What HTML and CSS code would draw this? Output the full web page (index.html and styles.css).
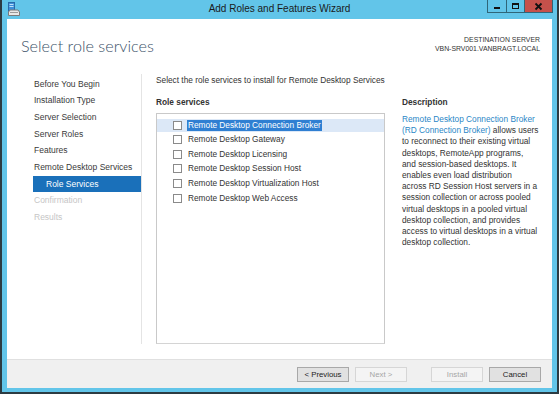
FILE: index.html
```html
<!DOCTYPE html>
<html lang="en">
<head>
    <meta charset="UTF-8">
    <title>Add Roles and Features Wizard</title>
    <link rel="stylesheet" href="styles.css">
</head>
<body>
    <div class="window">
        <div class="titlebar">
            <div class="title-left">
                <svg class="app-icon" width="12" height="14" viewBox="0 0 12 14">
                    <rect x="0.5" y="0.5" width="6" height="9" fill="#3d8fd8" stroke="#2a6aa8"/>
                    <rect x="1.5" y="2" width="4" height="1" fill="#bfe0f8"/>
                    <rect x="1.5" y="4" width="4" height="1" fill="#bfe0f8"/>
                    <path d="M2 8 L10 8 L11.5 10 L11.5 13.5 L0.5 13.5 L0.5 10 Z" fill="#e8e8e8" stroke="#7a7a7a"/>
                    <rect x="2" y="10" width="8" height="1" fill="#9a9a9a"/>
                </svg>
            </div>
            <div class="title-text">Add Roles and Features Wizard</div>
            <div class="title-right">
                <svg class="controls" width="66" height="13" viewBox="0 0 66 13">
                    <rect x="0.5" y="-1" width="19" height="13.5" fill="#62c5e9" stroke="#2f6679"/>
                    <rect x="19.5" y="-1" width="18" height="13.5" fill="#62c5e9" stroke="#2f6679"/>
                    <rect x="37.5" y="-1" width="28" height="13.5" fill="#c6514b" stroke="#2f6679"/>
                    <rect x="7" y="7" width="6" height="2" fill="#111"/>
                    <rect x="25.5" y="3.5" width="6" height="5" fill="none" stroke="#111"/>
                    <rect x="25" y="3" width="7" height="2" fill="#111"/>
                    <path d="M48.5 3.5 L54.5 9.5 M54.5 3.5 L48.5 9.5" stroke="#111" stroke-width="1.8"/>
                </svg>
            </div>
        </div>

        <div class="client">
            <div class="header">
                <h1>Select role services</h1>
                <div class="destination">
                    <div>DESTINATION SERVER</div>
                    <div>VBN-SRV001.VANBRAGT.LOCAL</div>
                </div>
            </div>

            <div class="body">
                <div class="nav">
                    <div class="nav-item">Before You Begin</div>
                    <div class="nav-item">Installation Type</div>
                    <div class="nav-item">Server Selection</div>
                    <div class="nav-item">Server Roles</div>
                    <div class="nav-item">Features</div>
                    <div class="nav-item">Remote Desktop Services</div>
                    <div class="nav-item sub active">Role Services</div>
                    <div class="nav-item disabled">Confirmation</div>
                    <div class="nav-item disabled">Results</div>
                </div>

                <div class="main">
                    <div class="instruction">Select the role services to install for Remote Desktop Services</div>
                    <div class="columns">
                        <div class="services">
                            <div class="section-title">Role services</div>
                            <div class="list">
                                <div class="row selected"><span class="check"></span><span class="label">Remote Desktop Connection Broker</span></div>
                                <div class="row"><span class="check"></span><span class="label">Remote Desktop Gateway</span></div>
                                <div class="row"><span class="check"></span><span class="label">Remote Desktop Licensing</span></div>
                                <div class="row"><span class="check"></span><span class="label">Remote Desktop Session Host</span></div>
                                <div class="row"><span class="check"></span><span class="label">Remote Desktop Virtualization Host</span></div>
                                <div class="row"><span class="check"></span><span class="label">Remote Desktop Web Access</span></div>
                            </div>
                        </div>
                        <div class="description">
                            <div class="section-title">Description</div>
                            <p><a href="#" class="link">Remote Desktop Connection Broker<br>(RD Connection Broker)</a> allows users<br>to reconnect to their existing virtual<br>desktops, RemoteApp programs,<br>and session-based desktops. It<br>enables even load distribution<br>across RD Session Host servers in a<br>session collection or across pooled<br>virtual desktops in a pooled virtual<br>desktop collection, and provides<br>access to virtual desktops in a virtual<br>desktop collection.</p>
                        </div>
                    </div>
                </div>
            </div>

            <div class="footer">
                <button class="btn">&lt; Previous</button>
                <button class="btn" disabled>Next &gt;</button>
                <button class="btn btn-install" disabled>Install</button>
                <button class="btn">Cancel</button>
            </div>
        </div>
    </div>
</body>
</html>
```

FILE: styles.css
```css
body {
    margin: 0;
    font-family: 'Liberation Sans', Arial, sans-serif;
    color: #333;
    background: #2c3b42;
}
.window {
    width: 555px;
    height: 392px;
    background: #62c5e9;
    border-left: 2px solid #2c3b42;
    border-right: 2px solid #2c3b42;
    border-bottom: 2px solid #2c3b42;
    display: flex;
    flex-direction: column;
}
.titlebar {
    height: 19px;
    display: flex;
    align-items: flex-start;
    flex-shrink: 0;
}
.title-left {
    width: 90px;
    padding: 2px 0 0 6px;
    box-sizing: border-box;
}
.app-icon {
    display: block;
}
.title-text {
    flex: 1;
    text-align: center;
    font-size: 10px;
    line-height: 17px;
    color: #1a1a1a;
}
.title-right {
    width: 90px;
    display: flex;
    justify-content: flex-end;
    padding-right: 4px;
    box-sizing: border-box;
}
.controls {
    display: block;
    flex-shrink: 0;
}
.client {
    flex: 1;
    min-height: 0;
    margin: 0 5px 4px;
    background: #fff;
    display: flex;
    flex-direction: column;
}
.header {
    height: 55px;
    display: flex;
    justify-content: space-between;
    padding: 0 12px 0 14px;
    flex-shrink: 0;
}
h1 {
    margin: 17px 0 0;
    font-family: Lato, 'Liberation Sans', sans-serif;
    font-weight: 300;
    font-size: 16.2px;
    color: #3c5269;
}
.destination {
    margin-top: 16px;
    text-align: right;
    font-size: 6.9px;
    line-height: 9px;
    color: #333;
}
.body {
    flex: 1;
    min-height: 0;
    display: flex;
}
.nav {
    width: 108px;
    margin-left: 26px;
    padding-top: 1.7px;
    font-size: 8.5px;
    color: #3a3a3a;
}
.nav-item {
    height: 16.67px;
    line-height: 16.67px;
    padding-left: 1px;
    white-space: nowrap;
}
.nav-item.sub {
    padding-left: 13px;
}
.nav-item.active {
    background: #1a70ba;
    color: #fff;
}
.nav-item.disabled {
    color: #c6c6c6;
}
.main {
    flex: 1;
    margin-bottom: 15px;
    border-left: 1px solid #e4e4e4;
    padding-left: 14px;
    font-size: 8.3px;
}
.instruction {
    line-height: 12px;
}
.columns {
    display: flex;
    gap: 17px;
    margin-top: 10px;
}
.services {
    width: 229px;
}
.section-title {
    font-weight: bold;
    line-height: 12px;
    color: #333;
}
.list {
    margin-top: 5px;
    height: 231px;
    box-sizing: border-box;
    border: 1px solid #c9c9c9;
    border-bottom-color: #d4d4d4;
    padding-top: 4.6px;
}
.row {
    height: 13px;
    margin-bottom: 1.6px;
    display: flex;
    align-items: center;
    font-size: 8.3px;
    white-space: nowrap;
}
.row.selected {
    background: #dce8f7;
}
.check {
    width: 7px;
    height: 7px;
    border: 1px solid #8a8a8a;
    background: #fff;
    margin-left: 16px;
    margin-right: 5px;
    flex-shrink: 0;
}
.label {
    line-height: 11px;
    padding: 0 1px;
}
.row.selected .label {
    background: #2f7fd2;
    color: #fff;
}
.description {
    width: 145px;
}
.description p {
    margin: 6px 0 0;
    line-height: 11.2px;
    white-space: nowrap;
    color: #333;
}
.link {
    color: #2a86c6;
    text-decoration: none;
}
.footer {
    height: 29px;
    flex-shrink: 0;
    background: #f0f0f0;
    border-top: 1px solid #e0e0e0;
    display: flex;
    justify-content: flex-end;
    align-items: flex-start;
    gap: 6px;
    padding: 7px 11px 0 0;
    box-sizing: border-box;
}
.btn {
    width: 52px;
    height: 15px;
    padding: 0;
    font-family: 'Liberation Sans', Arial, sans-serif;
    font-size: 7.8px;
    color: #222;
    background: #e1e1e1;
    border: 1px solid #a8a8a8;
    border-radius: 0;
}
.btn:disabled {
    background: #f4f4f4;
    border-color: #d6d6d6;
    color: #a6a6a6;
}
.btn-install {
    margin-left: 18px;
}
```
